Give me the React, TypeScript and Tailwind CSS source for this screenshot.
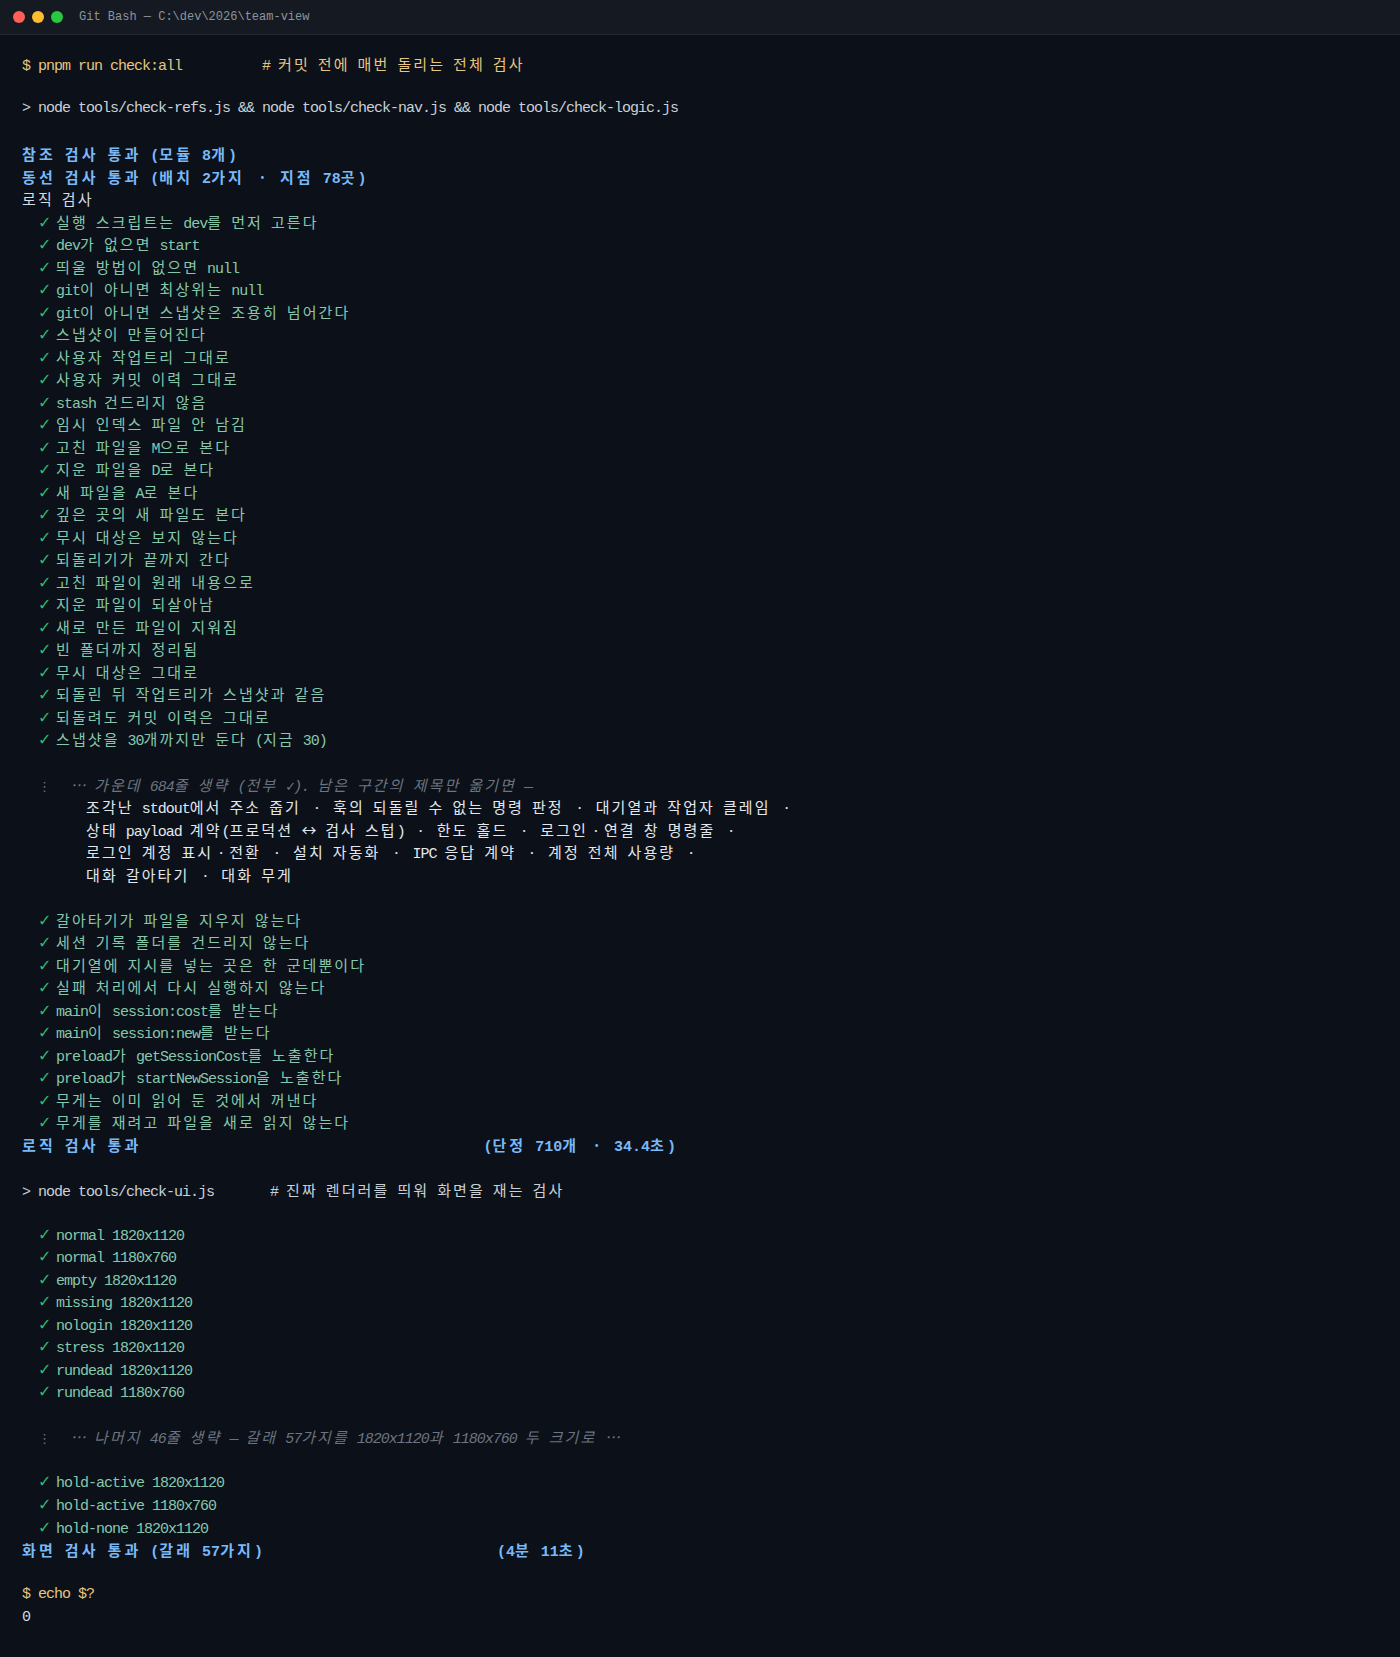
import React from "react";

type Line = {
  t?: string;
  tone?: string;
  bold?: boolean;
  italic?: boolean;
  check?: boolean;
};

const YELLOW = "text-[#e6c680]";
const CMD = "text-[#c9d1d9]";
const BLUE = "text-[#78b9f7]";
const PLAIN = "text-[#d5dce4]";
const NOTE = "text-[#6b7480]";
const LIST = "text-[#e2e8ee]";

const logicChecks = [
  "실행 스크립트는 dev를 먼저 고른다",
  "dev가 없으면 start",
  "띄울 방법이 없으면 null",
  "git이 아니면 최상위는 null",
  "git이 아니면 스냅샷은 조용히 넘어간다",
  "스냅샷이 만들어진다",
  "사용자 작업트리 그대로",
  "사용자 커밋 이력 그대로",
  "stash 건드리지 않음",
  "임시 인덱스 파일 안 남김",
  "고친 파일을 M으로 본다",
  "지운 파일을 D로 본다",
  "새 파일을 A로 본다",
  "깊은 곳의 새 파일도 본다",
  "무시 대상은 보지 않는다",
  "되돌리기가 끝까지 간다",
  "고친 파일이 원래 내용으로",
  "지운 파일이 되살아남",
  "새로 만든 파일이 지워짐",
  "빈 폴더까지 정리됨",
  "무시 대상은 그대로",
  "되돌린 뒤 작업트리가 스냅샷과 같음",
  "되돌려도 커밋 이력은 그대로",
  "스냅샷을 30개까지만 둔다 (지금 30)",
];

const tailChecks = [
  "갈아타기가 파일을 지우지 않는다",
  "세션 기록 폴더를 건드리지 않는다",
  "대기열에 지시를 넣는 곳은 한 군데뿐이다",
  "실패 처리에서 다시 실행하지 않는다",
  "main이 session:cost를 받는다",
  "main이 session:new를 받는다",
  "preload가 getSessionCost를 노출한다",
  "preload가 startNewSession을 노출한다",
  "무게는 이미 읽어 둔 것에서 꺼낸다",
  "무게를 재려고 파일을 새로 읽지 않는다",
];

const uiChecks = [
  "normal 1820x1120",
  "normal 1180x760",
  "empty 1820x1120",
  "missing 1820x1120",
  "nologin 1820x1120",
  "stress 1820x1120",
  "rundead 1820x1120",
  "rundead 1180x760",
];

const holdChecks = [
  "hold-active 1820x1120",
  "hold-active 1180x760",
  "hold-none 1820x1120",
];

const blank: Line = {};

const lines: Line[] = [
  { t: "$ pnpm run check:all          # 커밋 전에 매번 돌리는 전체 검사", tone: YELLOW },
  blank,
  { t: "> node tools/check-refs.js && node tools/check-nav.js && node tools/check-logic.js", tone: CMD },
  blank,
  { t: "참조 검사 통과 (모듈 8개)", tone: BLUE, bold: true },
  { t: "동선 검사 통과 (배치 2가지 · 지점 78곳)", tone: BLUE, bold: true },
  { t: "로직 검사", tone: PLAIN },
  ...logicChecks.map((t) => ({ t, check: true })),
  blank,
  { t: "  ⋮   … 가운데 684줄 생략 (전부 ✓). 남은 구간의 제목만 옮기면 —", tone: NOTE, italic: true },
  { t: "        조각난 stdout에서 주소 줍기 · 훅의 되돌릴 수 없는 명령 판정 · 대기열과 작업자 클레임 ·", tone: LIST },
  { t: "        상태 payload 계약(프로덕션 ↔ 검사 스텁) · 한도 홀드 · 로그인·연결 창 명령줄 ·", tone: LIST },
  { t: "        로그인 계정 표시·전환 · 설치 자동화 · IPC 응답 계약 · 계정 전체 사용량 ·", tone: LIST },
  { t: "        대화 갈아타기 · 대화 무게", tone: LIST },
  blank,
  ...tailChecks.map((t) => ({ t, check: true })),
  { t: "로직 검사 통과                                      (단정 710개 · 34.4초)", tone: BLUE, bold: true },
  blank,
  { t: "> node tools/check-ui.js       # 진짜 렌더러를 띄워 화면을 재는 검사", tone: CMD },
  blank,
  ...uiChecks.map((t) => ({ t, check: true })),
  blank,
  { t: "  ⋮   … 나머지 46줄 생략 — 갈래 57가지를 1820x1120과 1180x760 두 크기로 …", tone: NOTE, italic: true },
  blank,
  ...holdChecks.map((t) => ({ t, check: true })),
  { t: "화면 검사 통과 (갈래 57가지)                          (4분 11초)", tone: BLUE, bold: true },
  blank,
  { t: "$ echo $?", tone: YELLOW },
  { t: "0", tone: PLAIN },
];

// terminal grid: ascii = 8px cell, hangul and a few symbols = 2 cells
function Cells({ text, bold }: { text: string; bold?: boolean }) {
  const parts = text.split(/([\uAC00-\uD7A3]+|[·…⋮↔✓])/).filter(Boolean);
  return (
    <>
      {parts.map((p, i) => {
        if (/^[\uAC00-\uD7A3]/.test(p)) {
          return (
            <span
              key={i}
              className={
                bold
                  ? "font-['Noto_Sans_CJK_KR',sans-serif] tracking-[3.08px]"
                  : "font-['Noto_Sans_CJK_KR',sans-serif] tracking-[2.08px]"
              }
            >
              {p}
            </span>
          );
        }
        if (/^[·…↔]$/.test(p)) {
          return (
            <span
              key={i}
              className={
                bold
                  ? "inline-block w-[17px] text-center font-['Noto_Sans_CJK_KR',sans-serif]"
                  : "inline-block w-[16px] text-center font-['Noto_Sans_CJK_KR',sans-serif]"
              }
            >
              {p}
            </span>
          );
        }
        if (p === "✓" || p === "⋮") {
          return (
            <span key={i} className="inline-block w-[8px] text-center font-['DejaVu_Sans',sans-serif] text-[13px]">
              {p}
            </span>
          );
        }
        return (
          <span key={i} className={bold ? "tracking-[0px]" : "tracking-[-1px]"}>
            {p}
          </span>
        );
      })}
    </>
  );
}

function Row({ line }: { line: Line }) {
  if (line.check) {
    return (
      <div className="h-[22.53px] leading-[22.53px] whitespace-pre text-[#86c8ad]">
        <span className="tracking-[-1px]">{"  "}</span>
        <span className="inline-block w-[10px] font-['DejaVu_Sans',sans-serif] text-[16px] text-[#2fb878]">✓</span>
        <span className="tracking-[-1px]"> </span>
        <Cells text={line.t ?? ""} />
      </div>
    );
  }
  if (!line.t) return <div className="h-[22.53px]" />;
  return (
    <div
      className={[
        "h-[22.53px] leading-[22.53px] whitespace-pre",
        line.tone ?? "",
        line.bold ? "font-bold" : "",
        line.italic ? "italic" : "",
      ].join(" ")}
    >
      <Cells text={line.t} bold={line.bold} />
    </div>
  );
}

export default function App() {
  return (
    <div className="min-h-screen bg-[#0c1018] font-['Liberation_Mono',monospace] text-[15px]">
      <div className="h-[35px] flex items-center gap-[7px] pl-[13px] bg-[#151a22] border-b border-[#242a33]">
        <span className="w-3 h-3 rounded-full bg-[#ff5f57]" />
        <span className="w-3 h-3 rounded-full bg-[#febc2e]" />
        <span className="w-3 h-3 rounded-full bg-[#28c840]" />
        <span className="ml-[9px] text-[12px] text-[#8b949e] font-['Liberation_Mono',monospace]">
          Git Bash — C:\dev\2026\team-view
        </span>
      </div>
      <div className="pl-[22px] pt-[18px] pb-[28px]">
        {lines.map((line, i) => (
          <Row key={i} line={line} />
        ))}
      </div>
    </div>
  );
}
